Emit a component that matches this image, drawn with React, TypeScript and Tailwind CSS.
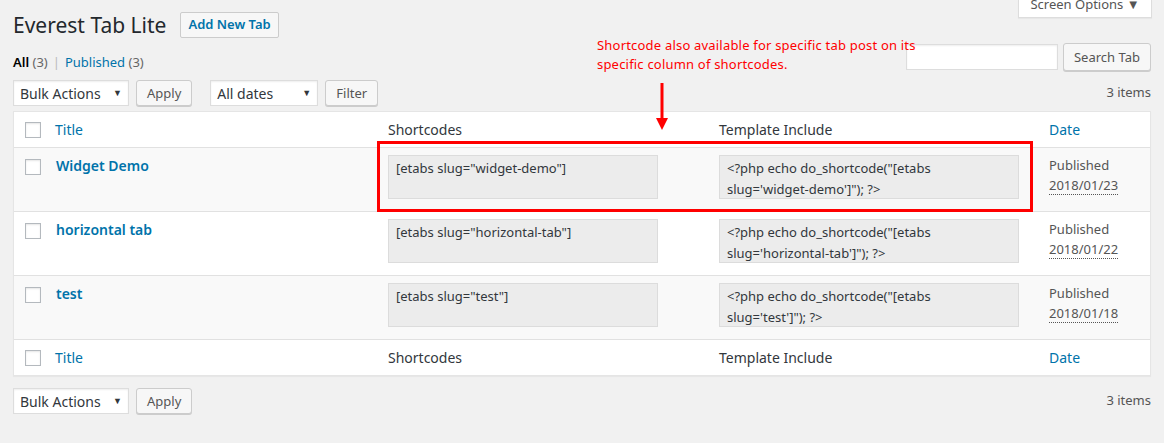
import { ReactNode } from "react";

const rows = [
  { title: "Widget Demo", slug: "widget-demo", date: "2018/01/23", alt: true },
  { title: "horizontal tab", slug: "horizontal-tab", date: "2018/01/22", alt: false },
  { title: "test", slug: "test", date: "2018/01/18", alt: true },
];

const cols = "grid grid-cols-[32px_332px_331px_330px_112px]";

const Check = () => (
  <span className="block w-4 h-4 bg-white border border-[#b4b9be] shadow-[inset_0_1px_2px_rgba(0,0,0,0.1)]" />
);

const Button = ({ children, className = "" }: { children: ReactNode; className?: string }) => (
  <button
    className={`h-[26px] px-[10px] rounded-[3px] border border-[#cccccc] bg-[#f7f7f7] shadow-[0_1px_0_#cccccc] text-[13px] text-[#555555] leading-none ${className}`}
  >
    {children}
  </button>
);

const Select = ({ label, width }: { label: string; width: string }) => (
  <div
    className={`${width} h-[26px] bg-white border border-[#dddddd] shadow-[inset_0_1px_2px_rgba(0,0,0,0.07)] flex items-center justify-between pl-[6px] pr-[6px] text-[14px] text-[#32373c]`}
  >
    <span>{label}</span>
    <span className="text-[9px] text-[#32373c]">▼</span>
  </div>
);

const HeaderRow = () => (
  <div className={`${cols} h-[35px] items-center text-[14px]`}>
    <div className="pl-[11px]">
      <Check />
    </div>
    <div className="pl-[9px] text-[#0073aa]">Title</div>
    <div className="pl-[10px] text-[#32373c]">Shortcodes</div>
    <div className="pl-[10px] text-[#32373c]">Template Include</div>
    <div className="pl-[10px] text-[#0073aa]">Date</div>
  </div>
);

export default function App() {
  return (
    <div className="relative min-h-[443px] bg-[#f1f1f1] px-[13px] font-['Noto_Sans',sans-serif] text-[#444444]">
      <div className="flex items-start justify-between">
        <div className="flex items-center gap-[14px] pt-[12px]">
          <h1 className="text-[21px] leading-[25px] font-normal text-[#23282d]">Everest Tab Lite</h1>
          <button className="h-[26px] px-[7px] rounded-[2px] border border-[#cccccc] bg-[#f7f7f7] text-[13px] font-semibold text-[#0073aa]">
            Add New Tab
          </button>
        </div>
        <div className="mr-[-1px] w-[134px] h-[18px] overflow-hidden bg-white border border-t-0 border-[#dddddd] shadow-[0_1px_1px_rgba(0,0,0,0.04)] flex justify-center">
          <span className="-mt-[6px] text-[13px] text-[#555555] leading-[20px]">Screen Options ▼</span>
        </div>
      </div>

      <div className="flex items-start justify-between mt-[5px]">
        <div className="pt-[9px] text-[13px] leading-[20px] text-[#666666]">
          <span className="font-semibold text-black">All</span> (3)
          <span className="mx-[5px] text-[#bbbbbb]">|</span>
          <span className="text-[#0073aa]">Published</span> (3)
        </div>
        <div className="flex items-center gap-[5px]">
          <div className="w-[152px] h-[26px] bg-white border border-[#dddddd] shadow-[inset_0_1px_2px_rgba(0,0,0,0.07)]" />
          <Button className="h-[28px]">Search Tab</Button>
        </div>
      </div>

      <div className="flex items-center justify-between mt-[8px]">
        <div className="flex items-center">
          <Select label="Bulk Actions" width="w-[116px]" />
          <Button className="ml-[7px]">Apply</Button>
          <Select label="All dates" width="w-[108px] ml-[18px]" />
          <Button className="ml-[7px]">Filter</Button>
        </div>
        <span className="text-[13px] text-[#555555]">3 items</span>
      </div>

      <div className="mt-[5px] bg-white border border-[#e5e5e5] shadow-[0_1px_1px_rgba(0,0,0,0.04)]">
        <HeaderRow />
        {rows.map((r) => (
          <div
            key={r.slug}
            className={`${cols} h-[64px] border-t border-[#e1e1e1] ${r.alt ? "bg-[#f9f9f9]" : "bg-white"}`}
          >
            <div className="pl-[11px] pt-[11px]">
              <Check />
            </div>
            <div className="pl-[10px] pt-[7px] text-[14px] font-semibold text-[#0073aa]">{r.title}</div>
            <div className="pt-[7px] pl-[10px]">
              <div className="w-[270px] h-[44px] bg-[#ececec] border border-[#dcdcdc] px-[7px] pt-[2px] text-[13px] leading-[21px] text-[#32373c]">
                [etabs slug="{r.slug}"]
              </div>
            </div>
            <div className="pt-[7px] pl-[10px]">
              <div className="w-[300px] h-[44px] bg-[#ececec] border border-[#dcdcdc] px-[7px] pt-[2px] text-[13px] leading-[21px] text-[#32373c]">
                &lt;?php echo do_shortcode("[etabs slug='{r.slug}']"); ?&gt;
              </div>
            </div>
            <div className="pl-[10px] pt-[7px] text-[13px] leading-[20px] text-[#555555]">
              <div>Published</div>
              <abbr className="no-underline border-b border-dotted border-[#555555]">{r.date}</abbr>
            </div>
          </div>
        ))}
        <div className="border-t border-[#e1e1e1]">
          <HeaderRow />
        </div>
      </div>

      <div className="flex items-center justify-between mt-[12px]">
        <div className="flex items-center">
          <Select label="Bulk Actions" width="w-[116px]" />
          <Button className="ml-[7px]">Apply</Button>
        </div>
        <span className="text-[13px] text-[#555555]">3 items</span>
      </div>

      {/* annotation overlay */}
      <p className="absolute left-[597px] top-[36px] w-[340px] text-[13px] leading-[19px] text-[#ff0000] tracking-[0.2px]">
        Shortcode also available for specific tab post on its specific column of shortcodes.
      </p>
      <svg className="absolute left-[656px] top-[83px]" width="12" height="47" viewBox="0 0 12 47">
        <line x1="6" y1="0" x2="6" y2="38" stroke="#ff0000" strokeWidth="3" />
        <polygon points="0,35 12,35 6,47" fill="#ff0000" />
      </svg>
      <div className="absolute left-[377px] top-[141px] w-[656px] h-[71px] border-[3px] border-[#ff0000]" />
    </div>
  );
}
